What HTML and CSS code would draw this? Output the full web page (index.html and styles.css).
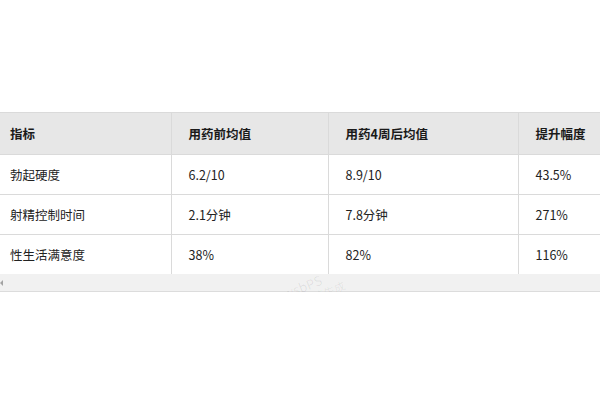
FILE: index.html
```html
<!DOCTYPE html>
<html lang="zh">
<head>
<meta charset="utf-8">
<link rel="stylesheet" href="styles.css">
</head>
<body>
<div class="page">
  <div class="table-wrap">
    <table class="data">
      <colgroup>
        <col class="c1"><col class="c2"><col class="c3"><col class="c4">
      </colgroup>
      <thead>
        <tr><th>指标</th><th>用药前均值</th><th>用药4周后均值</th><th>提升幅度</th></tr>
      </thead>
      <tbody>
        <tr><td>勃起硬度</td><td>6.2/10</td><td>8.9/10</td><td>43.5%</td></tr>
        <tr><td>射精控制时间</td><td>2.1分钟</td><td>7.8分钟</td><td>271%</td></tr>
        <tr><td>性生活满意度</td><td>38%</td><td>82%</td><td>116%</td></tr>
      </tbody>
    </table>
    <div class="scrollbar"><span class="arrow"></span></div>
  </div>
  <div class="watermark">wsbPS<br><span>智能生成</span></div>
</div>
</body>
</html>
```

FILE: styles.css
```css
html, body {
  margin: 0;
  padding: 0;
  background: #fff;
}
body {
  font-family: "Microsoft YaHei", "Noto Sans CJK SC", "Noto Sans", sans-serif;
  color: #222;
}
.page {
  position: relative;
  padding-top: 112px;
  width: 600px;
}
.table-wrap {
  width: 600px;
  overflow: hidden;
}
.data {
  border-collapse: collapse;
  table-layout: fixed;
  width: 700px;
  font-size: 12.5px;
}
.c1 { width: 171px; }
.c2 { width: 157px; }
.c3 { width: 190px; }
.c4 { width: 182px; }
.data th, .data td {
  text-align: left;
  padding: 0 0 0 17px;
  border: 1px solid #dadada;
  line-height: 18px;
}
.data th:first-child, .data td:first-child {
  padding-left: 10px;
  border-left: none;
}
.data th {
  background: #e7e7e7;
  font-weight: bold;
  height: 41px;
  color: #1a1a1a;
}
.data td {
  height: 39px;
}
.data tbody tr:last-child td {
  border-bottom: none;
}
.scrollbar {
  height: 17px;
  background: #f1f1f1;
  border-bottom: 1px solid #dcdcdc;
  position: relative;
}
.arrow {
  position: absolute;
  left: 0;
  top: 6px;
  width: 0;
  height: 0;
  border-top: 3px solid transparent;
  border-bottom: 3px solid transparent;
  border-right: 3px solid #a3a3a3;
}
.watermark {
  position: absolute;
  z-index: 2;
  left: 284px;
  top: 276px;
  transform: rotate(-22deg);
  color: rgba(0, 0, 0, 0.07);
  font-size: 13px;
  line-height: 13px;
  pointer-events: none;
}
.watermark span {
  margin-left: 16px;
  font-size: 11px;
}
```
